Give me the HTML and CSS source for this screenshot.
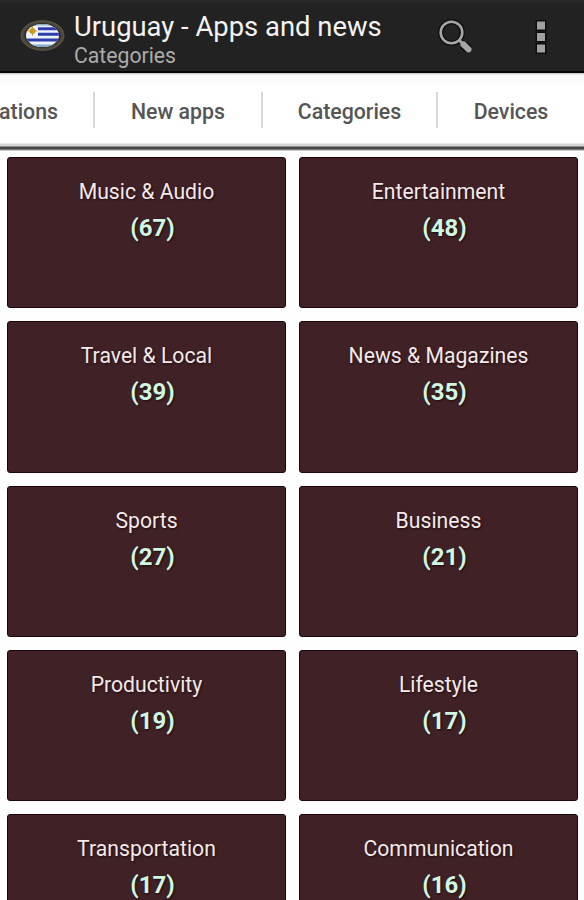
FILE: index.html
```html
<!DOCTYPE html>
<html lang="en">
<head>
<meta charset="utf-8">
<title>Uruguay - Apps and news</title>
<link rel="stylesheet" href="styles.css">
</head>
<body>
<header class="bar">
  <svg class="logo" width="46" height="32" viewBox="0 0 46 32" aria-hidden="true">
    <defs><clipPath id="flag"><ellipse cx="23.500" cy="15.500" rx="16.500" ry="11.500"/></clipPath></defs>
    <ellipse cx="23.500" cy="15.500" rx="21.500" ry="14.800" fill="#4b493d" stroke="#5e594b"/>
    <ellipse cx="23.500" cy="15.500" rx="18.500" ry="12.500" fill="#34322b"/>
    <g clip-path="url(#flag)">
      <path d="M4 3h38v25H4z" fill="#eef3fa"/>
      <path d="M19 7.200h23v3H19zM19 12.800h23v3H19zM4 18.400h38v3H4z" fill="#2c3eac"/>
      <path d="M4 3h38v2.500H4zM4 24.500h38v3H4z" fill="#83aec6"/>
      <circle cx="13.500" cy="11" r="3" fill="#c99b25"/>
      <path d="M13.500 6.500v9M9 11h9" stroke="#c99b25"/>
    </g>
  </svg>
  <div class="titles">
    <h1>Uruguay - Apps and news</h1>
    <p>Categories</p>
  </div>
  <svg class="search" width="40" height="40" viewBox="0 0 40 40" aria-hidden="true">
    <g fill="none" stroke="#0c0c0c" stroke-width="5"><circle cx="15.500" cy="15.500" r="10.800"/><path d="M24 23.500l3 3" /><path d="M28 28l4.500 4.500" stroke-width="9"/></g>
    <g fill="none" stroke="#a6a6a6"><circle cx="15.500" cy="15.500" r="10.800" stroke-width="2.600"/><path d="M22.800 22.800l4 4" stroke-width="3"/><path d="M27.500 27.500l5 4.800" stroke-width="6" stroke-linecap="round"/></g>
  </svg>
  <svg class="more" width="14" height="38" viewBox="0 0 14 38" aria-hidden="true">
    <path d="M3 3.500h8v8H3zM3 15h8v8H3zM3 26.500h8v8H3z" fill="#a0a0a0" stroke="#0c0c0c" stroke-width="3" paint-order="stroke"/>
  </svg>
</header>
<nav class="tabs">
  <a class="tab first">ations</a>
  <a class="tab apps">New apps</a>
  <a class="tab cats">Categories</a>
  <a class="tab devices">Devices</a>
</nav>
<main class="grid">
  <section class="card"><h2>Music &amp; Audio</h2><p>(67)</p></section>
  <section class="card"><h2>Entertainment</h2><p>(48)</p></section>
  <section class="card"><h2>Travel &amp; Local</h2><p>(39)</p></section>
  <section class="card"><h2>News &amp; Magazines</h2><p>(35)</p></section>
  <section class="card"><h2>Sports</h2><p>(27)</p></section>
  <section class="card"><h2>Business</h2><p>(21)</p></section>
  <section class="card"><h2>Productivity</h2><p>(19)</p></section>
  <section class="card"><h2>Lifestyle</h2><p>(17)</p></section>
  <section class="card"><h2>Transportation</h2><p>(17)</p></section>
  <section class="card"><h2>Communication</h2><p>(16)</p></section>
</main>
</body>
</html>
```
FILE: styles.css
```css
* { box-sizing: border-box; margin: 0; }
body {
  width: 584px;
  height: 900px;
  overflow: hidden;
  background: #fefefe;
  font-family: Roboto, sans-serif;
}
.bar {
  display: flex;
  height: 73px;
  padding-left: 19px;
  background: linear-gradient(#2a2a2a, #222 5px);
  border-bottom: 2px solid #050505;
}
.logo { margin-top: 20px; }
.titles { width: 362px; padding: 11px 0 0 9px; }
.titles h1 {
  font-size: 27.4px;
  line-height: 32px;
  font-weight: 400;
  color: #f3f3f3;
  white-space: nowrap;
}
.titles p { font-size: 21.2px; line-height: 25px; color: #ababab; }
.search { margin: 17px 0 0 9px; }
.more { margin: 18px 0 0 58px; }
.tabs {
  display: flex;
  align-items: center;
  height: 78px;
  padding-bottom: 4px;
  background: linear-gradient(#bbb 0, #f7f7f7 2px, #fff 14px, #fff 70px, #d5d5d5 71px, #d5d5d5 73px, #444 74px, #444 76px, #aaa 77px, #eee 78px);
  font-size: 21.3px;
  font-weight: 500;
  color: #555;
}
.tab {
  display: flex;
  align-items: center;
  justify-content: center;
  height: 36px;
  padding-top: 2px;
  border-right: 2px solid #d8d8d8;
}
.first { width: 95px; justify-content: flex-end; padding-right: 35px; }
.apps { width: 168px; }
.cats { width: 175px; }
.devices { width: 146px; border-right: 0; }
.grid {
  display: grid;
  grid-template-columns: 279px 279px;
  grid-auto-rows: 151.3px;
  gap: 13px;
  height: 749px;
  padding: 6px 7px 0;
  overflow: hidden;
}
.card {
  background: #402125;
  border: 1px solid #1d0609;
  border-radius: 3px;
  text-align: center;
}
.card h2 {
  margin-top: 20px;
  font-size: 21.2px;
  line-height: 27px;
  font-weight: 400;
  color: #f3eaea;
  text-shadow: 1px 1px 2px #1d0c0e;
}
.card p {
  padding: 9px 0 0 12px;
  font-size: 24px;
  line-height: 28px;
  font-weight: 700;
  color: #d0f7e2;
  text-shadow: 1px 1px 2px #1d0c0e;
}
```
